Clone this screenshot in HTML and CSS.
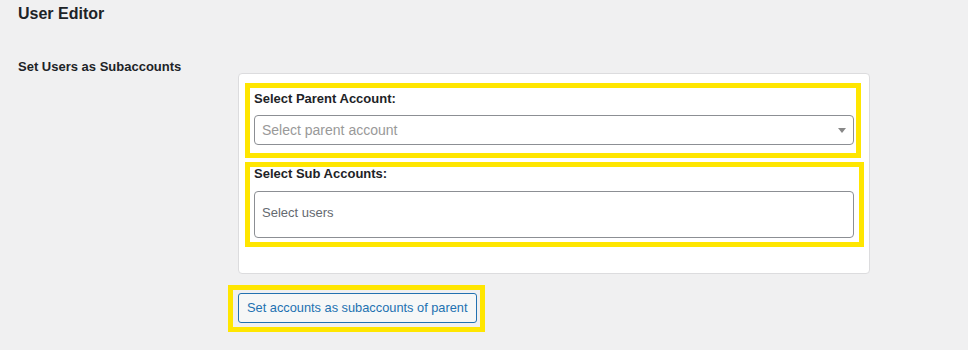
FILE: index.html
```html
<!DOCTYPE html>
<html lang="en">
<head>
<meta charset="utf-8">
<title>User Editor</title>
<link rel="stylesheet" href="styles.css">
</head>
<body>
<div class="wrap">
  <h2 class="title">User Editor</h2>
  <div class="form-row">
    <div class="row-label">Set Users as Subaccounts</div>
    <div class="row-field">
      <div class="card">
        <div class="mark mark-parent">
          <div class="field-label">Select Parent Account:</div>
          <div class="select">
            <span class="placeholder">Select parent account</span>
            <span class="arrow"></span>
          </div>
        </div>
        <div class="mark mark-sub">
          <div class="field-label">Select Sub Accounts:</div>
          <div class="multi">
            <span class="multi-placeholder">Select users</span>
          </div>
        </div>
      </div>
      <div class="mark mark-button">
        <button class="button" type="button">Set accounts as subaccounts of parent</button>
      </div>
    </div>
  </div>
</div>
</body>
</html>
```
FILE: styles.css
```css
html, body {
  margin: 0;
  padding: 0;
}
body {
  background: #f0f0f1;
  color: #1d2327;
  font-family: "Liberation Sans", Arial, sans-serif;
  font-size: 13px;
}
.wrap {
  padding: 0 18px;
}
.title {
  margin: 0;
  padding-top: 2px;
  font-size: 16px;
  line-height: 24px;
  font-weight: 700;
  color: #1d2327;
}
.form-row {
  display: flex;
  margin-top: 32px;
}
.row-label {
  width: 220px;
  flex: none;
  font-size: 13px;
  line-height: 18px;
  font-weight: 700;
}
.row-field {
  padding-top: 15px;
}
.card {
  width: 624px;
  background: #fff;
  border: 1px solid #dcdcde;
  border-radius: 4px;
  padding: 9px 0 26px 6px;
}
.mark {
  border: 5px solid #ffe600;
}
.mark-parent {
  width: 600px;
  padding: 2px 2px 8px 4px;
}
.mark-sub {
  width: 601px;
  margin-top: 4px;
  padding: 0 4px 4px 4px;
}
.field-label {
  font-size: 13px;
  line-height: 18px;
  font-weight: 700;
  color: #1d2327;
}
.mark-parent .field-label {
  margin-bottom: 7px;
}
.mark-sub .field-label {
  margin-top: -2px;
  margin-bottom: 8px;
}
.select {
  position: relative;
  width: 591px;
  height: 28px;
  border: 1px solid #8c8f94;
  border-radius: 4px;
  background: #fff;
  padding-left: 7px;
}
.placeholder {
  font-size: 14px;
  line-height: 28px;
  color: #999;
}
.arrow {
  position: absolute;
  right: 7px;
  top: 12px;
  width: 0;
  height: 0;
  border-style: solid;
  border-width: 5px 4px 0 4px;
  border-color: #888 transparent transparent transparent;
}
.multi {
  width: 591px;
  height: 20px;
  border: 1px solid #8c8f94;
  border-radius: 4px;
  padding: 11px 0 14px 7px;
}
.multi-placeholder {
  display: block;
  font-size: 13px;
  line-height: 20px;
  color: #646970;
}
.mark-button {
  display: inline-block;
  margin-top: 11px;
  margin-left: -10px;
  padding: 3px 3px 4px 5px;
}
.button {
  display: block;
  height: 30px;
  padding: 0 8px;
  margin: 0;
  border: 1px solid #2271b1;
  border-radius: 3px;
  background: #f6f7f7;
  color: #2271b1;
  font-family: "Liberation Sans", Arial, sans-serif;
  font-size: 12.8px;
  line-height: 28px;
  cursor: pointer;
}
```
